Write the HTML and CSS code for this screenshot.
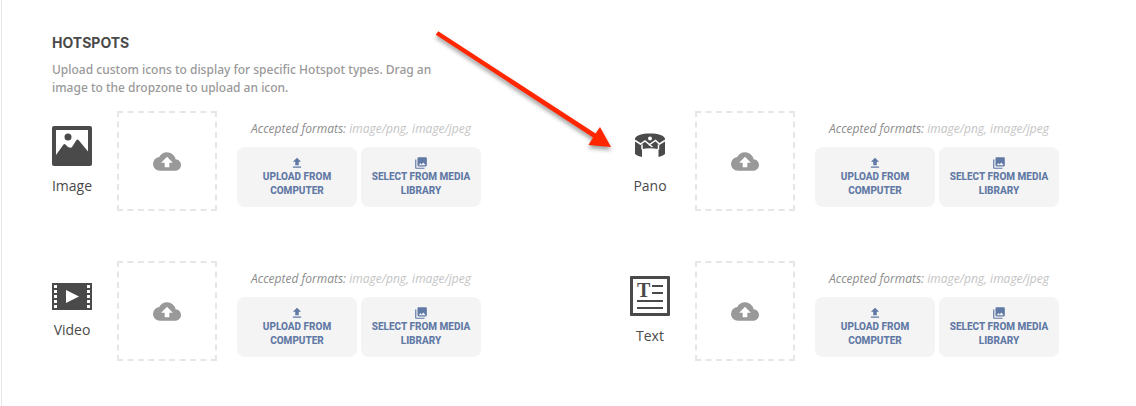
FILE: index.html
```html
<!DOCTYPE html>
<html lang="en">
<head>
  <meta charset="utf-8">
  <title>Hotspots</title>
  <link rel="stylesheet" href="styles.css">
</head>
<body>
  <!-- Shared icons -->
  <svg class="sprite" aria-hidden="true">
    <symbol id="cloud" viewBox="0 0 24 16">
      <path d="M19.35 6.04A7.49 7.49 0 0 0 12 0C9.11 0 6.6 1.64 5.35 4.04A5.994 5.994 0 0 0 0 10c0 3.31 2.69 6 6 6h13c2.76 0 5-2.24 5-5 0-2.64-2.05-4.78-4.65-4.96zM14 9v4h-4V9H7l5-5 5 5h-3z"/>
    </symbol>
    <symbol id="upload" viewBox="0 0 24 24">
      <path d="M9 16h6v-6h4l-7-7-7 7h4v6zm-4 2h14v2H5v-2z"/>
    </symbol>
    <symbol id="library" viewBox="0 0 24 24">
      <path d="M22 16V4c0-1.100-.9-2-2-2H8c-1.100 0-2 .9-2 2v12c0 1.100.9 2 2 2h12c1.100 0 2-.9 2-2zm-11-4l2.030 2.710L16 11l4 5H8l3-4zM2 6v14c0 1.100.9 2 2 2h14v-2H4V6H2z"/>
    </symbol>
  </svg>

  <main class="panel">
    <h1 class="title">HOTSPOTS</h1>
    <p class="intro">Upload custom icons to display for specific Hotspot types. Drag an image to the dropzone to upload an icon.</p>

    <div class="hotspots">
      <section class="hotspot">
        <div class="type">
          <svg class="type-icon" viewBox="0 0 40 40">
            <path fill-rule="evenodd" d="M2 0h36a2 2 0 0 1 2 2v36a2 2 0 0 1-2 2H2a2 2 0 0 1-2-2V2a2 2 0 0 1 2-2zM4 4v25L11.500 18.500q1-1 2 0L16 21q3 1.500 4 0L24.500 14q1-1 2 0L36 25.500V4z"/>
            <circle cx="16" cy="11" r="3.500"/>
          </svg>
          <span class="type-name">Image</span>
        </div>
        <button class="dropzone" type="button" aria-label="Image icon dropzone"><svg class="cloud"><use href="#cloud"/></svg></button>
        <div class="source">
          <p class="formats"><b>Accepted formats:</b> image/png, image/jpeg</p>
          <div class="buttons">
            <button class="btn" type="button"><svg class="btn-icon"><use href="#upload"/></svg>UPLOAD FROM COMPUTER</button>
            <button class="btn" type="button"><svg class="btn-icon"><use href="#library"/></svg>SELECT FROM MEDIA LIBRARY</button>
          </div>
        </div>
      </section>

      <section class="hotspot">
        <div class="type">
          <svg class="type-icon" viewBox="0 0 40 40">
            <path d="M5 13C5 9.500 12 7.500 20 7.500S35 9.500 35 13V28Q33 30 28.500 31V23Q20 21.500 12 23V31Q7 30 5 28z"/>
            <circle class="cut" cx="20" cy="12.500" r="2"/>
            <path class="line" d="M5 14.500l5.500 3.500 4.500-3 4.500 3.500 6-4 4 3.500 5.500-3.500"/>
            <path class="line" d="M12 18.500v5M28.500 18.500v5"/>
            <path class="line" d="M19 18.500l3.500 2.500"/>
          </svg>
          <span class="type-name">Pano</span>
        </div>
        <button class="dropzone" type="button" aria-label="Pano icon dropzone"><svg class="cloud"><use href="#cloud"/></svg></button>
        <div class="source">
          <p class="formats"><b>Accepted formats:</b> image/png, image/jpeg</p>
          <div class="buttons">
            <button class="btn" type="button"><svg class="btn-icon"><use href="#upload"/></svg>UPLOAD FROM COMPUTER</button>
            <button class="btn" type="button"><svg class="btn-icon"><use href="#library"/></svg>SELECT FROM MEDIA LIBRARY</button>
          </div>
        </div>
      </section>

      <section class="hotspot">
        <div class="type">
          <svg class="type-icon type-icon-wide" viewBox="0 0 40 27">
            <path d="M0 0h40v27H0z"/>
            <path class="cut" d="M14 7l13 6.500L14 20z"/>
            <path class="cut" d="M2 2h3v3H2zm0 5h3v3H2zm0 5h3v3H2zm0 5h3v3H2zm0 5h3v3H2zM35 2h3v3h-3zm0 5h3v3h-3zm0 5h3v3h-3zm0 5h3v3h-3zm0 5h3v3h-3z"/>
          </svg>
          <span class="type-name">Video</span>
        </div>
        <button class="dropzone" type="button" aria-label="Video icon dropzone"><svg class="cloud"><use href="#cloud"/></svg></button>
        <div class="source">
          <p class="formats"><b>Accepted formats:</b> image/png, image/jpeg</p>
          <div class="buttons">
            <button class="btn" type="button"><svg class="btn-icon"><use href="#upload"/></svg>UPLOAD FROM COMPUTER</button>
            <button class="btn" type="button"><svg class="btn-icon"><use href="#library"/></svg>SELECT FROM MEDIA LIBRARY</button>
          </div>
        </div>
      </section>

      <section class="hotspot">
        <div class="type">
          <svg class="type-icon" viewBox="0 0 40 40">
            <path fill-rule="evenodd" d="M1 0h38a1 1 0 0 1 1 1v38a1 1 0 0 1-1 1H1a1 1 0 0 1-1-1V1a1 1 0 0 1 1-1zM3 3v34h34V3z"/>
            <path d="M22 9h11v2H22zm0 7h11v2H22zM7 24h26v2H7zM7 31h26v2H7z"/>
            <text class="glyph" x="7" y="21">T</text>
          </svg>
          <span class="type-name">Text</span>
        </div>
        <button class="dropzone" type="button" aria-label="Text icon dropzone"><svg class="cloud"><use href="#cloud"/></svg></button>
        <div class="source">
          <p class="formats"><b>Accepted formats:</b> image/png, image/jpeg</p>
          <div class="buttons">
            <button class="btn" type="button"><svg class="btn-icon"><use href="#upload"/></svg>UPLOAD FROM COMPUTER</button>
            <button class="btn" type="button"><svg class="btn-icon"><use href="#library"/></svg>SELECT FROM MEDIA LIBRARY</button>
          </div>
        </div>
      </section>
    </div>

    <!-- Arrow pointing at the Pano icon -->
    <svg class="arrow" viewBox="0 0 190 130" aria-hidden="true">
      <path d="M10.200 1.300L167.600 103.400L172 97L183 117L160.500 115L165 107.500L7.800 4.800z"/>
    </svg>
  </main>
</body>
</html>
```

FILE: styles.css
```css
* {
  box-sizing: border-box;
}

body {
  margin: 0;
  background-color: #fff;
  color: #4a4a4a;
  font-family: "Open Sans", "Noto Sans", sans-serif;
}

.sprite {
  display: none;
}

.panel {
  position: relative;
  min-height: 100vh;
  margin-left: 1px;
  padding: 32px 0 45px 50px;
  border-left: 1px solid #e6e6e6;
}

.title {
  margin: 0;
  font-family: Inter, sans-serif;
  font-size: 14px;
  font-weight: 700;
  line-height: 22px;
}

.intro {
  max-width: 400px;
  margin: 7px 0 14px;
  color: #999;
  font-family: "Noto Sans", sans-serif;
  font-size: 12px;
  font-weight: 500;
  line-height: 18px;
}

.hotspots {
  display: grid;
  grid-template-columns: 1fr 1fr;
  gap: 50px 72px;
}

.hotspot {
  display: flex;
  align-items: center;
}

.type {
  display: flex;
  flex-direction: column;
  align-items: center;
  gap: 10px;
  width: 40px;
  margin-right: 25px;
}

.type-icon {
  width: 40px;
  height: 40px;
  fill: #4a4a4a;
}

.type-icon-wide {
  height: 27px;
}

.cut {
  fill: #fff;
}

.line {
  fill: none;
  stroke: #fff;
  stroke-width: 1.5px;
}

.glyph {
  font-family: "Liberation Serif", serif;
  font-size: 20px;
  font-weight: 700;
}

.type-name {
  font-size: 14px;
  line-height: 20px;
}

.dropzone {
  display: flex;
  align-items: center;
  justify-content: center;
  width: 100px;
  height: 100px;
  margin-right: 20px;
  padding: 0;
  border: 2px dashed #e6e6e6;
  background: none;
}

.cloud {
  width: 28px;
  height: 19px;
  fill: #999;
}

.source {
  padding-top: 4px;
}

.formats {
  margin: 0 0 9px;
  padding-left: 4px;
  color: #c4c4c4;
  font-size: 12px;
  font-style: italic;
  line-height: 18px;
  text-align: center;
}

.formats b {
  color: #8c8c8c;
  font-weight: 500;
}

.buttons {
  display: flex;
  gap: 4px;
}

.btn {
  display: flex;
  flex-direction: column;
  align-items: center;
  justify-content: center;
  width: 120px;
  height: 60px;
  padding: 0 8px;
  border: 0;
  border-radius: 8px;
  background-color: #f4f4f4;
  color: #6179a5;
  font-family: Roboto, sans-serif;
  font-size: 10px;
  font-weight: 800;
  line-height: 14px;
}

.btn-icon {
  width: 14px;
  height: 14px;
  fill: #6179a5;
}

.arrow {
  position: absolute;
  top: 30px;
  left: 426px;
  width: 190px;
  height: 130px;
  fill: #ff2600;
  filter: drop-shadow(0 3px 2px rgba(0, 0, 0, 0.4));
  pointer-events: none;
}
```
